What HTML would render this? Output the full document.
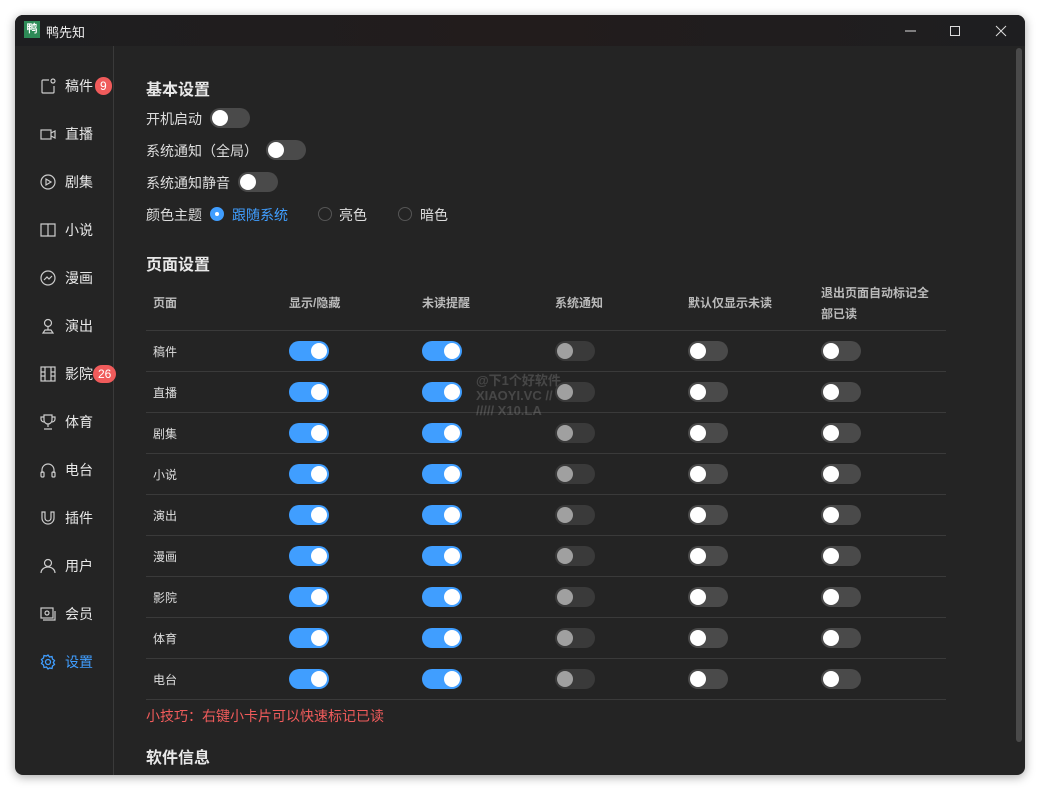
<!DOCTYPE html>
<html><head><meta charset="utf-8"><style>
*{box-sizing:border-box;margin:0;padding:0}
body{width:1040px;height:791px;background:#fff;font-family:"Liberation Sans","Noto Sans CJK SC",sans-serif;position:relative;overflow:hidden}
.win{position:absolute;left:15px;top:15px;width:1010px;height:760px;background:#242424;border-radius:8px;overflow:hidden;box-shadow:0 2px 10px rgba(0,0,0,.35)}
.tb{position:absolute;left:0;top:0;width:100%;height:31px;background:linear-gradient(90deg,#1e1e20,#221c1c 50%,#1e1e20)}
.logo{position:absolute;left:9px;top:6px;width:16px;height:17px;background:#2e8b57;color:#fff;font-size:11px;line-height:17px;text-align:center;font-weight:bold}
.title{position:absolute;left:31px;top:7px;color:#eee;font-size:13px}
.side{position:absolute;left:98px;top:31px;width:1px;height:729px;background:#3a3a3a}
.ni{position:absolute;left:25px;color:#e8e8e8;font-size:14px;height:20px;line-height:20px}
.ni svg{position:absolute;left:0;top:2px}
.ni span{position:absolute;left:25px;white-space:nowrap}
.badge{position:absolute;background:#f05b5b;color:#fff;font-size:12px;height:18px;line-height:18px;border-radius:9px;text-align:center;padding:0 5px}
.t{position:absolute;color:#ddd;font-size:14px;white-space:nowrap}
.h{position:absolute;color:#e8e8e8;font-size:16px;font-weight:bold}
.tg{position:absolute;width:40px;height:20px;border-radius:10px;background:#4a4a4a}
.tg:after{content:"";position:absolute;top:2px;left:2px;width:16px;height:16px;border-radius:50%;background:#fff}
.tg.on{background:#409eff}.tg.on:after{left:22px}
.tg.dis{background:#3a3a3a}.tg.dis:after{background:#a0a0a0}
.line{position:absolute;left:131px;width:800px;height:1px;background:#3a3a3a}
.th{position:absolute;color:#bbb;font-size:12px;font-weight:bold;top:279px}
.rl{position:absolute;left:138px;color:#ddd;font-size:12px}
.rad{position:absolute;width:14px;height:14px;border-radius:50%;border:1px solid #555}
</style></head><body>
<div class="win">
<div class="tb"></div>
<div class="logo">鸭</div><div class="title">鸭先知</div>
<svg style="position:absolute;left:885px;top:10px" width="120" height="12"><line x1="5" y1="6" x2="16" y2="6" stroke="#ddd"/><rect x="50.5" y="1.5" width="9" height="9" fill="none" stroke="#ddd"/><path d="M96 1l10 10M106 1l-10 10" stroke="#ddd"/></svg>
<div class="side"></div>
<div style="position:absolute;left:1001px;top:33px;width:6px;height:694px;background:#4a4a4a;border-radius:3px"></div>

<div class="ni" style="top:61px"><svg width="16" height="16" fill="none" stroke="#ccc" stroke-width="1.2"><path d="M9 2H3a1 1 0 0 0-1 1v11a1 1 0 0 0 1 1h10a1 1 0 0 0 1-1V8"/><circle cx="13" cy="3" r="2"/></svg><span>稿件</span></div>
<div class="badge" style="left:80px;top:62px">9</div>
<div class="ni" style="top:109px"><svg width="16" height="16" fill="none" stroke="#ccc" stroke-width="1.2"><rect x="1" y="4" width="10" height="9"/><path d="M11 7l4-2v7l-4-2"/></svg><span>直播</span></div>
<div class="ni" style="top:157px"><svg width="16" height="16" fill="none" stroke="#ccc" stroke-width="1.2"><circle cx="8" cy="8" r="7"/><path d="M6 5v6l5-3z"/></svg><span>剧集</span></div>
<div class="ni" style="top:205px"><svg width="16" height="16" fill="none" stroke="#ccc" stroke-width="1.2"><path d="M1 2h14v12H1zM8 2v12"/></svg><span>小说</span></div>
<div class="ni" style="top:253px"><svg width="16" height="16" fill="none" stroke="#ccc" stroke-width="1.2"><circle cx="8" cy="8" r="7"/><path d="M4 10l3-3 2 2 3-3"/></svg><span>漫画</span></div>
<div class="ni" style="top:301px"><svg width="16" height="16" fill="none" stroke="#ccc" stroke-width="1.2"><circle cx="8" cy="5" r="3.5"/><path d="M8 9v3M3 15h10l-2-3H5z"/></svg><span>演出</span></div>
<div class="ni" style="top:349px"><svg width="16" height="16" fill="none" stroke="#ccc" stroke-width="1.2"><rect x="1" y="1" width="14" height="14"/><path d="M5 1v14M11 1v14M1 6h4M1 10h4M11 6h4M11 10h4"/></svg><span>影院</span></div>
<div class="badge" style="left:78px;top:350px">26</div>
<div class="ni" style="top:397px"><svg width="16" height="16" fill="none" stroke="#ccc" stroke-width="1.2"><path d="M4 1h8v5a4 4 0 0 1-8 0zM4 3H1v2a3 3 0 0 0 3 3M12 3h3v2a3 3 0 0 1-3 3M8 10v3M4 15h8"/></svg><span>体育</span></div>
<div class="ni" style="top:445px"><svg width="16" height="16" fill="none" stroke="#ccc" stroke-width="1.2"><path d="M2 11V8a6 6 0 0 1 12 0v3"/><rect x="1" y="10" width="3" height="5" rx="1"/><rect x="12" y="10" width="3" height="5" rx="1"/></svg><span>电台</span></div>
<div class="ni" style="top:493px"><svg width="16" height="16" fill="none" stroke="#ccc" stroke-width="1.2"><path d="M2 2v6a6 6 0 0 0 12 0V2h-3v6a3 3 0 0 1-6 0V2z"/></svg><span>插件</span></div>
<div class="ni" style="top:541px"><svg width="16" height="16" fill="none" stroke="#ccc" stroke-width="1.2"><circle cx="8" cy="5" r="3.5"/><path d="M1 15a7 6 0 0 1 14 0"/></svg><span>用户</span></div>
<div class="ni" style="top:589px"><svg width="16" height="16" fill="none" stroke="#ccc" stroke-width="1.2"><rect x="1" y="2" width="12" height="10"/><path d="M3 14h12V5"/><circle cx="7" cy="7" r="2"/></svg><span>会员</span></div>
<div class="ni" style="top:637px;color:#409eff"><svg width="16" height="16" fill="none" stroke="#409eff" stroke-width="1.3"><circle cx="8" cy="8" r="2.5"/><path d="M8 1l1.5 2 2.5-.5.5 2.5 2 1.5-1.2 2 1.2 2-2 1.5-.5 2.5-2.5-.5L8 15l-1.5-2-2.5.5-.5-2.5-2-1.5 1.2-2L1.5 5.5l2-1.5.5-2.5 2.5.5z"/></svg><span>设置</span></div>

<div class="h" style="left:131px;top:61px">基本设置</div>
<div class="t" style="left:131px;top:94px">开机启动</div><div class="tg" style="left:195px;top:93px"></div>
<div class="t" style="left:131px;top:126px">系统通知（全局）</div><div class="tg" style="left:251px;top:125px"></div>
<div class="t" style="left:131px;top:158px">系统通知静音</div><div class="tg" style="left:223px;top:157px"></div>
<div class="t" style="left:131px;top:190px">颜色主题</div>
<div class="rad" style="left:195px;top:192px;background:#409eff;border-color:#409eff"><div style="position:absolute;left:4px;top:4px;width:4px;height:4px;background:#fff;border-radius:50%"></div></div>
<div class="t" style="left:217px;top:190px;color:#409eff">跟随系统</div>
<div class="rad" style="left:303px;top:192px"></div><div class="t" style="left:324px;top:190px">亮色</div>
<div class="rad" style="left:383px;top:192px"></div><div class="t" style="left:405px;top:190px">暗色</div>

<div class="h" style="left:131px;top:236px">页面设置</div>
<div class="th" style="left:138px">页面</div>
<div class="th" style="left:274px">显示/隐藏</div>
<div class="th" style="left:407px">未读提醒</div>
<div class="th" style="left:540px">系统通知</div>
<div class="th" style="left:673px">默认仅显示未读</div>
<div class="th" style="left:806px;top:268px;line-height:21px;width:130px">退出页面自动标记全<br>部已读</div>
<div id="rows"></div>
<div style="position:absolute;left:461px;top:358px;color:rgba(255,255,255,.16);font-size:13px;font-weight:bold;line-height:15px">@下1个好软件<br>XIAOYI.VC //<br>///// X10.LA</div>

<div class="t" style="left:131px;top:691px;color:#f05b5b">小技巧：右键小卡片可以快速标记已读</div>
<div class="h" style="left:131px;top:729px">软件信息</div>
</div>
<script>
var n=["稿件","直播","剧集","小说","演出","漫画","影院","体育","电台"],h="";
for(var i=0;i<10;i++)h+='<div class="line" style="top:'+(315+i*41)+'px"></div>';
for(var i=0;i<9;i++){var y=336+i*41;h+='<div class="rl" style="top:'+(y-8)+'px">'+n[i]+'</div>';
h+='<div class="tg on" style="left:274px;top:'+(y-10)+'px"></div><div class="tg on" style="left:407px;top:'+(y-10)+'px"></div><div class="tg dis" style="left:540px;top:'+(y-10)+'px"></div><div class="tg" style="left:673px;top:'+(y-10)+'px"></div><div class="tg" style="left:806px;top:'+(y-10)+'px"></div>';}
document.getElementById("rows").innerHTML=h;
</script>
</body></html>
